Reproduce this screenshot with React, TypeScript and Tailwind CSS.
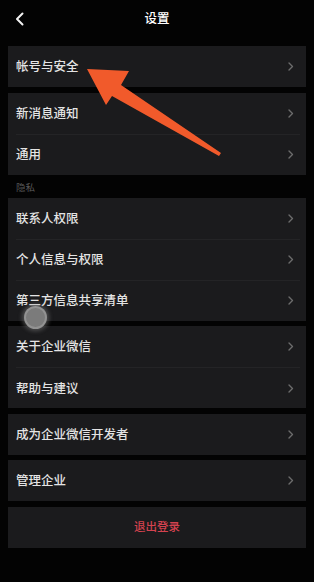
const Chevron = () => (
  <svg width="6" height="9" viewBox="0 0 6 9" className="shrink-0">
    <polyline points="1,1 4.5,4.5 1,8" fill="none" stroke="#6c6c6c" strokeWidth="1.4" strokeLinecap="round" strokeLinejoin="round" />
  </svg>
);

const Card = ({ items }: { items: string[] }) => (
  <div className="bg-[#1b1b1d]">
    {items.map((label, i) => (
      <div
        key={label}
        className={
          "ml-2 mr-[6px] h-[41px] flex items-center justify-between pr-[6px] " +
          (i > 0 ? "border-t border-[#242426]" : "")
        }
      >
        <span className="text-[12.5px] font-medium text-[#e4e4e4] leading-none">{label}</span>
        <Chevron />
      </div>
    ))}
  </div>
);

export default function App() {
  return (
    <div
      className="relative h-[582px] w-[314px] overflow-hidden bg-[#030303]"
      style={{ fontFamily: '"Noto Sans CJK SC", "Noto Sans", sans-serif' }}
    >
      {/* header */}
      <div className="h-9 flex items-center justify-center relative">
        <svg width="10" height="14" viewBox="0 0 10 14" className="absolute left-[15px] top-[12px]">
          <polyline points="7.5,1.5 2,7 7.5,12.5" fill="none" stroke="#f2f2f2" strokeWidth="2" strokeLinecap="round" strokeLinejoin="round" />
        </svg>
        <span className="text-[12.5px] font-medium text-white">设置</span>
      </div>

      <div className="mt-[10px] px-2 flex flex-col gap-[5.5px]">
        <Card items={["帐号与安全"]} />
        <div>
          <Card items={["新消息通知", "通用"]} />
          <div className="h-[23px] flex items-center pl-2 pt-[2px] text-[9.5px] text-[#575757]">隐私</div>
          <Card items={["联系人权限", "个人信息与权限", "第三方信息共享清单"]} />
        </div>
        <Card items={["关于企业微信", "帮助与建议"]} />
        <Card items={["成为企业微信开发者"]} />
        <Card items={["管理企业"]} />
        <div className="bg-[#1b1b1d] h-[41px] flex items-center justify-center">
          <span className="text-[11.5px] font-medium text-[#d4424f]">退出登录</span>
        </div>
      </div>

      {/* touch indicator */}
      <div className="absolute left-[24px] top-[306px] w-[23px] h-[23px] rounded-full bg-[#7b7b7b] border-2 border-[#9c9c9c]/70 shadow-[0_0_4px_2px_rgba(140,140,140,0.45)]" />

      {/* annotation arrow */}
      <svg className="absolute left-0 top-0 pointer-events-none" width="314" height="582" viewBox="0 0 314 582">
        <polygon
          points="87,69 129,71 121,85 221,153 219,156 112,96 106,105"
          fill="#f15a2b"
        />
      </svg>
    </div>
  );
}
